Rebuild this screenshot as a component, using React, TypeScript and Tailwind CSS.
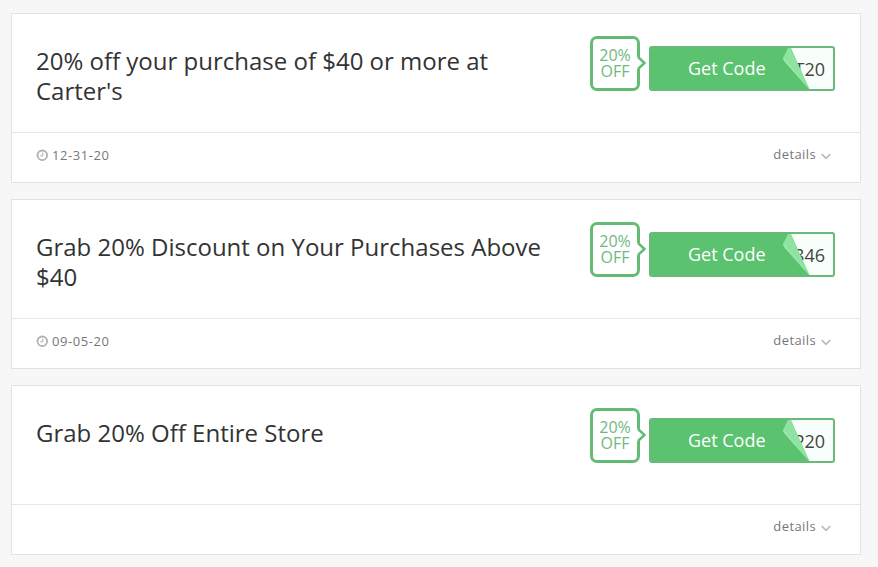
import React from "react";

interface Coupon {
  title: string;
  code: string;
  expires?: string;
}

const coupons: Coupon[] = [
  {
    title: "20% off your purchase of $40 or more at Carter's",
    code: "T20",
    expires: "12-31-20",
  },
  {
    title: "Grab 20% Discount on Your Purchases Above $40",
    code: "846",
    expires: "09-05-20",
  },
  { title: "Grab 20% Off Entire Store", code: "P20" },
];

const DiscountBadge: React.FC = () => (
  <div className="relative w-[50px] h-[55px] rounded-[7px] border-3 border-[#63bb76] bg-white text-[#6fb980] text-[16px] leading-[16px] text-center pt-[8px]">
    20%
    <br />
    OFF
    <svg
      className="absolute left-[43px] top-[15px]"
      width="12"
      height="18"
      viewBox="0 0 12 18"
    >
      <path d="M1 2.5 L8.5 9 L1 15.5 Z" fill="#fff" />
      <path
        d="M2 3 L8.5 9 L2 15"
        fill="none"
        stroke="#63bb76"
        strokeWidth="2.5"
      />
    </svg>
  </div>
);

const CodeButton: React.FC<{ code: string }> = ({ code }) => (
  <button className="relative block w-[186px] h-[45px] rounded-[3px] border-2 border-[#68b97a] bg-[#f8fffa] text-right overflow-hidden">
    <span className="block pr-2 text-[18px] leading-[43px] text-[#444]">
      {code}
    </span>
    <svg
      className="absolute -left-[2px] -top-[2px]"
      width="162"
      height="45"
      viewBox="0 0 162 45"
    >
      <path d="M0 0 H141 L161 45 H0 Z" fill="#5bc26f" />
      <path
        d="M139.5 1 Q140.5 0.5 141.5 2 L161 44 L136 16 Q133.5 13 134.5 11 Z"
        fill="#8fe3a0"
      />
      <path d="M134.5 11 L161 44 L136 16 Q133.5 13 134.5 11 Z" fill="#9ce8ac" />
    </svg>
    <span className="absolute left-[37px] top-0 text-[18px] leading-[41px] text-white">
      Get Code
    </span>
  </button>
);

const CouponCard: React.FC<{ coupon: Coupon }> = ({ coupon }) => (
  <div className="w-[850px] h-[170px] border border-[#e2e2e2] bg-white">
    <div className="flex h-[119px] border-b border-[#e8e8e8] pl-6 pr-[25px]">
      <h2 className="w-[520px] mt-[32px] text-[24px] leading-[30px] text-[#333]">
        {coupon.title}
      </h2>
      <div className="ml-auto mt-[22px] flex gap-[9px]">
        <DiscountBadge />
        <div className="mt-[10px]">
          <CodeButton code={coupon.code} />
        </div>
      </div>
    </div>
    <div className="flex h-[49px] justify-between pl-6 pr-[29px] text-[13px] leading-[18px] text-[#777]">
      <div className="mt-[13px]">
        {coupon.expires && (
          <span className="flex items-center gap-1 tracking-[0.55px]">
            <svg width="12" height="12" viewBox="0 0 12 12" fill="none" stroke="#b0b0b0">
              <circle cx="6.3" cy="6.3" r="4.8" strokeWidth="1.8" />
              <path d="M6.8 3.5 V6.8 H4.2" />
            </svg>
            {coupon.expires}
          </span>
        )}
      </div>
      <a className="mt-[12px] flex gap-[5px] tracking-[0.4px]">
        details
        <svg className="mt-[8px]" width="10" height="7" viewBox="0 0 10 7" fill="none" stroke="#b8b8b8">
          <path d="M0.7 1 L5 5.3 L9.3 1" strokeWidth="1.6" />
        </svg>
      </a>
    </div>
  </div>
);

const App: React.FC = () => {
  return (
    <div className="flex h-[567px] flex-col gap-4 overflow-hidden bg-[#f7f7f7] pl-[11px] pt-[13px] font-['Open_Sans',sans-serif]">
      {coupons.map((coupon) => (
        <CouponCard key={coupon.code} coupon={coupon} />
      ))}
    </div>
  );
};

export default App;
